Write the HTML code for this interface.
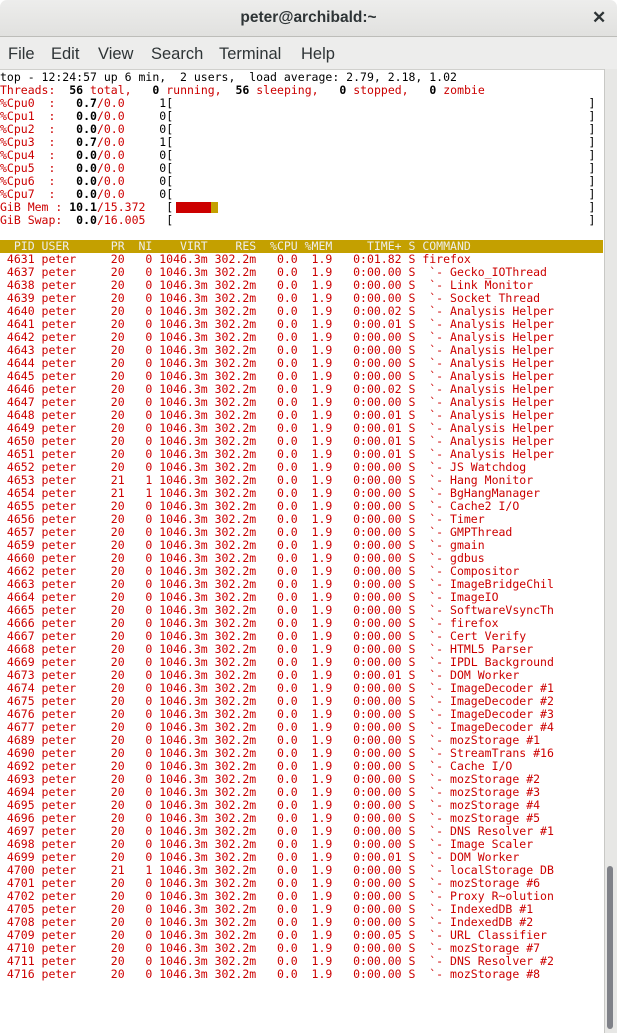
<!DOCTYPE html>
<html><head><meta charset="utf-8"><style>
*{margin:0;padding:0}
body{width:617px;height:1033px;overflow:hidden;background:#fff;position:relative;font-family:"Liberation Sans",sans-serif}
#title{position:absolute;left:0;top:0;width:617px;height:36px;background:linear-gradient(#ededec,#e1e1df);border-radius:7px 7px 0 0;border-bottom:1px solid #bdbdb9}
#title .t{position:absolute;left:0;right:0;top:9px;text-align:center;font-weight:bold;font-size:15.5px;color:#2e3436}
#title .x{position:absolute;left:592px;top:8px;font-size:17px;font-weight:bold;color:#2e3436}
#menu{position:absolute;left:0;top:37px;width:617px;height:32px;background:#ededec;border-bottom:1px solid #d0d0cd}
#menu span{position:absolute;top:8px;font-size:16.5px;color:#2e3436}
pre{position:absolute;left:0;top:71px;font-family:"DejaVu Sans Mono",monospace;font-size:11.5px;line-height:13px;color:#000}
.r{color:#cc0000}.b{font-weight:bold;color:#000}
.h{background:#c4a000;color:#eeeeec;display:inline-block;width:603px}
#sb{position:absolute;left:604px;top:69px;width:13px;height:964px;background:#e7e7e5;border-left:1px solid #c8c8c5;box-sizing:border-box}
#th{position:absolute;left:607px;top:866px;width:6px;height:163px;background:#7f8188;border-radius:3px}
</style></head><body>
<div id="title"><div class="t">peter@archibald:~</div><div class="x">✕</div></div>
<div id="menu"><span style="left:8px">File</span><span style="left:51px">Edit</span><span style="left:98px">View</span><span style="left:151px">Search</span><span style="left:219px">Terminal</span><span style="left:301px">Help</span></div>
<div style="position:absolute;left:176px;top:202px;width:35px;height:11px;background:#cc0000"></div>
<div style="position:absolute;left:211px;top:202px;width:7px;height:11px;background:#c4a000"></div>
<pre>top - 12:24:57 up 6 min,  2 users,  load average: 2.79, 2.18, 1.02
<span class="r">Threads:  <b class="b">56</b> total,   <b class="b">0</b> running,  <b class="b">56</b> sleeping,   <b class="b">0</b> stopped,   <b class="b">0</b> zombie</span>
<span class="r">%Cpu0  :   <b class="b">0.7</b>/0.0     </span>1[                                                            ]
<span class="r">%Cpu1  :   <b class="b">0.0</b>/0.0     </span>0[                                                            ]
<span class="r">%Cpu2  :   <b class="b">0.0</b>/0.0     </span>0[                                                            ]
<span class="r">%Cpu3  :   <b class="b">0.7</b>/0.0     </span>1[                                                            ]
<span class="r">%Cpu4  :   <b class="b">0.0</b>/0.0     </span>0[                                                            ]
<span class="r">%Cpu5  :   <b class="b">0.0</b>/0.0     </span>0[                                                            ]
<span class="r">%Cpu6  :   <b class="b">0.0</b>/0.0     </span>0[                                                            ]
<span class="r">%Cpu7  :   <b class="b">0.0</b>/0.0     </span>0[                                                            ]
<span class="r">GiB Mem : <b class="b">10.1</b>/15.372   </span>[                                                            ]
<span class="r">GiB Swap:  <b class="b">0.0</b>/16.005   </span>[                                                            ]

<span class="h">  PID USER      PR  NI    VIRT    RES  %CPU %MEM     TIME+ S COMMAND</span>
<span class="r"> 4631 peter     20   0 1046.3m 302.2m   0.0  1.9   0:01.82 S firefox
 4637 peter     20   0 1046.3m 302.2m   0.0  1.9   0:00.00 S  `- Gecko_IOThread
 4638 peter     20   0 1046.3m 302.2m   0.0  1.9   0:00.00 S  `- Link Monitor
 4639 peter     20   0 1046.3m 302.2m   0.0  1.9   0:00.00 S  `- Socket Thread
 4640 peter     20   0 1046.3m 302.2m   0.0  1.9   0:00.02 S  `- Analysis Helper
 4641 peter     20   0 1046.3m 302.2m   0.0  1.9   0:00.01 S  `- Analysis Helper
 4642 peter     20   0 1046.3m 302.2m   0.0  1.9   0:00.00 S  `- Analysis Helper
 4643 peter     20   0 1046.3m 302.2m   0.0  1.9   0:00.00 S  `- Analysis Helper
 4644 peter     20   0 1046.3m 302.2m   0.0  1.9   0:00.00 S  `- Analysis Helper
 4645 peter     20   0 1046.3m 302.2m   0.0  1.9   0:00.00 S  `- Analysis Helper
 4646 peter     20   0 1046.3m 302.2m   0.0  1.9   0:00.02 S  `- Analysis Helper
 4647 peter     20   0 1046.3m 302.2m   0.0  1.9   0:00.00 S  `- Analysis Helper
 4648 peter     20   0 1046.3m 302.2m   0.0  1.9   0:00.01 S  `- Analysis Helper
 4649 peter     20   0 1046.3m 302.2m   0.0  1.9   0:00.01 S  `- Analysis Helper
 4650 peter     20   0 1046.3m 302.2m   0.0  1.9   0:00.01 S  `- Analysis Helper
 4651 peter     20   0 1046.3m 302.2m   0.0  1.9   0:00.01 S  `- Analysis Helper
 4652 peter     20   0 1046.3m 302.2m   0.0  1.9   0:00.00 S  `- JS Watchdog
 4653 peter     21   1 1046.3m 302.2m   0.0  1.9   0:00.00 S  `- Hang Monitor
 4654 peter     21   1 1046.3m 302.2m   0.0  1.9   0:00.00 S  `- BgHangManager
 4655 peter     20   0 1046.3m 302.2m   0.0  1.9   0:00.00 S  `- Cache2 I/O
 4656 peter     20   0 1046.3m 302.2m   0.0  1.9   0:00.00 S  `- Timer
 4657 peter     20   0 1046.3m 302.2m   0.0  1.9   0:00.00 S  `- GMPThread
 4659 peter     20   0 1046.3m 302.2m   0.0  1.9   0:00.00 S  `- gmain
 4660 peter     20   0 1046.3m 302.2m   0.0  1.9   0:00.00 S  `- gdbus
 4662 peter     20   0 1046.3m 302.2m   0.0  1.9   0:00.00 S  `- Compositor
 4663 peter     20   0 1046.3m 302.2m   0.0  1.9   0:00.00 S  `- ImageBridgeChil
 4664 peter     20   0 1046.3m 302.2m   0.0  1.9   0:00.00 S  `- ImageIO
 4665 peter     20   0 1046.3m 302.2m   0.0  1.9   0:00.00 S  `- SoftwareVsyncTh
 4666 peter     20   0 1046.3m 302.2m   0.0  1.9   0:00.00 S  `- firefox
 4667 peter     20   0 1046.3m 302.2m   0.0  1.9   0:00.00 S  `- Cert Verify
 4668 peter     20   0 1046.3m 302.2m   0.0  1.9   0:00.00 S  `- HTML5 Parser
 4669 peter     20   0 1046.3m 302.2m   0.0  1.9   0:00.00 S  `- IPDL Background
 4673 peter     20   0 1046.3m 302.2m   0.0  1.9   0:00.01 S  `- DOM Worker
 4674 peter     20   0 1046.3m 302.2m   0.0  1.9   0:00.00 S  `- ImageDecoder #1
 4675 peter     20   0 1046.3m 302.2m   0.0  1.9   0:00.00 S  `- ImageDecoder #2
 4676 peter     20   0 1046.3m 302.2m   0.0  1.9   0:00.00 S  `- ImageDecoder #3
 4677 peter     20   0 1046.3m 302.2m   0.0  1.9   0:00.00 S  `- ImageDecoder #4
 4689 peter     20   0 1046.3m 302.2m   0.0  1.9   0:00.00 S  `- mozStorage #1
 4690 peter     20   0 1046.3m 302.2m   0.0  1.9   0:00.00 S  `- StreamTrans #16
 4692 peter     20   0 1046.3m 302.2m   0.0  1.9   0:00.00 S  `- Cache I/O
 4693 peter     20   0 1046.3m 302.2m   0.0  1.9   0:00.00 S  `- mozStorage #2
 4694 peter     20   0 1046.3m 302.2m   0.0  1.9   0:00.00 S  `- mozStorage #3
 4695 peter     20   0 1046.3m 302.2m   0.0  1.9   0:00.00 S  `- mozStorage #4
 4696 peter     20   0 1046.3m 302.2m   0.0  1.9   0:00.00 S  `- mozStorage #5
 4697 peter     20   0 1046.3m 302.2m   0.0  1.9   0:00.00 S  `- DNS Resolver #1
 4698 peter     20   0 1046.3m 302.2m   0.0  1.9   0:00.00 S  `- Image Scaler
 4699 peter     20   0 1046.3m 302.2m   0.0  1.9   0:00.01 S  `- DOM Worker
 4700 peter     21   1 1046.3m 302.2m   0.0  1.9   0:00.00 S  `- localStorage DB
 4701 peter     20   0 1046.3m 302.2m   0.0  1.9   0:00.00 S  `- mozStorage #6
 4702 peter     20   0 1046.3m 302.2m   0.0  1.9   0:00.00 S  `- Proxy R~olution
 4705 peter     20   0 1046.3m 302.2m   0.0  1.9   0:00.00 S  `- IndexedDB #1
 4708 peter     20   0 1046.3m 302.2m   0.0  1.9   0:00.00 S  `- IndexedDB #2
 4709 peter     20   0 1046.3m 302.2m   0.0  1.9   0:00.05 S  `- URL Classifier
 4710 peter     20   0 1046.3m 302.2m   0.0  1.9   0:00.00 S  `- mozStorage #7
 4711 peter     20   0 1046.3m 302.2m   0.0  1.9   0:00.00 S  `- DNS Resolver #2
 4716 peter     20   0 1046.3m 302.2m   0.0  1.9   0:00.00 S  `- mozStorage #8</span></pre>
<div id="sb"></div><div id="th"></div>
</body></html>
